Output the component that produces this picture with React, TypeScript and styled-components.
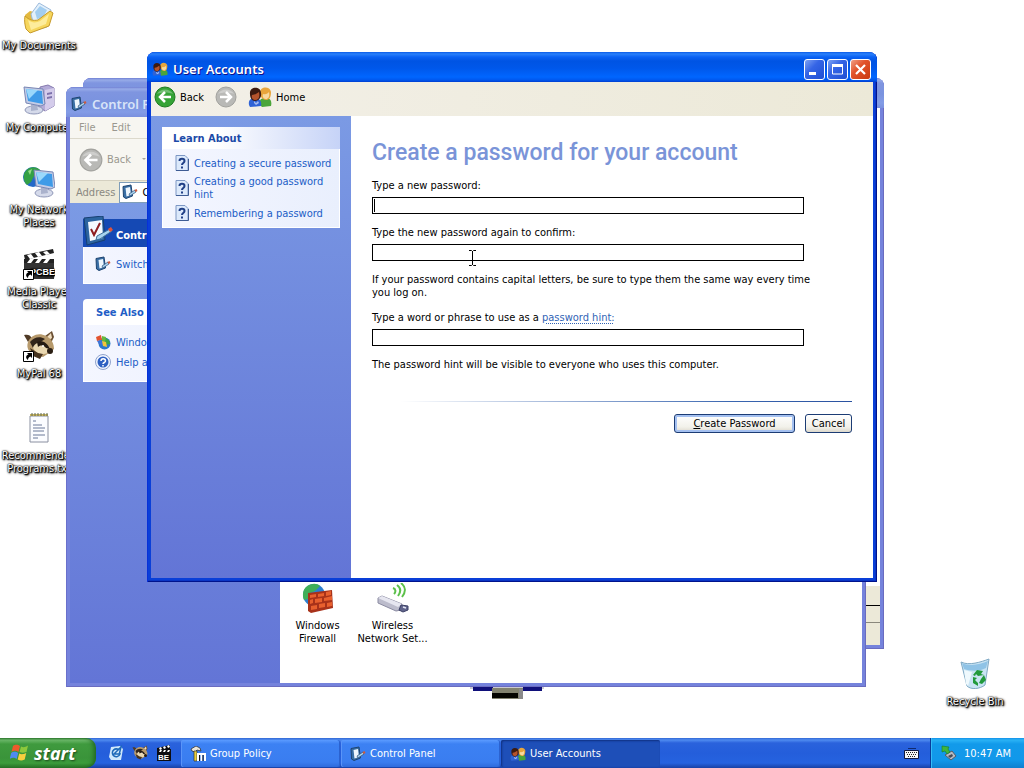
import React from "react";
import styled, { createGlobalStyle, css } from "styled-components";

const uiFont = `"DejaVu Sans Condensed", "Noto Sans", sans-serif`;
const titleFont = `"Noto Sans", "DejaVu Sans Condensed", sans-serif`;

const GlobalStyle = createGlobalStyle`
  *, *::before, *::after { box-sizing: border-box; }
  html, body, #root { height: 100%; }
  body {
    margin: 0;
    background: #fff;
    color: #000;
    font-family: ${uiFont};
    font-size: 11px;
    line-height: 13px;
    overflow: hidden;
  }
  button, input { font: inherit; color: inherit; margin: 0; }
  button { border: 0; padding: 0; background: none; }
  a { text-decoration: none; }
  svg { display: block; flex: none; }
  h1, h2, p, ul { margin: 0; padding: 0; }
  ul { list-style: none; }
`;

/* ---------- desktop ---------- */

const Screen = styled.div`
  display: flex;
  flex-direction: column;
  height: 100%;
`;

const Desktop = styled.main`
  position: relative;
  flex: 1;
  min-height: 0;
  overflow: hidden;
`;

const IconColumn = styled.ul`
  width: 78px;
  padding-top: 2px;
`;

const DesktopItem = styled.li`
  height: 82px;
`;

const Shortcut = styled.a`
  display: flex;
  flex-direction: column;
  align-items: center;
  gap: 5px;
  color: #fff;
  text-align: center;
  text-shadow: 1px 1px 1px #000, 0 0 2px #000, 1px 1px 2px #000, 0 0 1px #000, 1px 1px 3px #000;
`;

const BinSpot = styled.div`
  position: absolute;
  right: 12px;
  bottom: 30px;
  width: 74px;
`;

const TaskbarGlimpse = styled.div`
  position: absolute;
  left: 470px;
  bottom: 38px;
`;

/* ---------- windows ---------- */

const WindowFrame = styled.section<{ $inset: string; $active?: boolean }>`
  position: absolute;
  inset: ${(p) => p.$inset};
  display: flex;
  flex-direction: column;
  border-radius: 8px 8px 0 0;
  overflow: hidden;
  padding: 0 4px 4px;
  ${(p) =>
    p.$active
      ? css`
          background: #0a3fd8;
          box-shadow: inset 1px 0 #0831d9, inset -1px -1px #00138c, inset -2px -2px #0a35c4;
        `
      : css`
          background: #7583dc;
          box-shadow: inset 1px 0 #6a70cc, inset -1px -1px #6a6cc0;
        `}
`;

const TitleBar = styled.header<{ $active?: boolean }>`
  display: flex;
  align-items: center;
  gap: 5px;
  height: 30px;
  flex: none;
  margin: 0 -4px;
  padding: 4px 6px 0 5px;
  font: 600 13px/18px ${titleFont};
  ${(p) =>
    p.$active
      ? css`
          color: #fff;
          text-shadow: 1px 1px #0f1089;
          background: linear-gradient(#0a5be8 0, #2a80fa 2px, #0a62f4 5px, #0054e3 9px, #0057ea 16px, #0066ff 25px, #0058ee 28px, #003dd0 30px);
        `
      : css`
          color: #d8e4f8;
          background: linear-gradient(#7080d4 0, #97abe8 2px, #7f95e0 5px, #7a93df 16px, #839ce6 25px, #7a90de 30px);
        `}
`;

const CaptionButtons = styled.div`
  display: flex;
  gap: 2px;
  margin-left: auto;
`;

const CaptionButton = styled.button<{ $close?: boolean }>`
  width: 21px;
  height: 21px;
  border: 1px solid #fff;
  border-radius: 3px;
  background: ${(p) =>
    p.$close
      ? "linear-gradient(135deg, #f0a088, #e2532b 40%, #c9390f)"
      : "linear-gradient(135deg, #7ea2f2, #3565e6 40%, #1f4fd2)"};
`;

const Client = styled.div`
  display: flex;
  flex: 1;
  min-height: 0;
  background: #fff;
`;

const NavBar = styled.nav`
  display: flex;
  align-items: center;
  gap: 11px;
  height: 34px;
  flex: none;
  padding: 0 3px 4px;
  background: linear-gradient(90deg, #f3f0e8, #ece9d8);
`;

const NavButton = styled.button`
  display: flex;
  align-items: center;
  gap: 4px;
`;

/* ---------- task pane ---------- */

const TaskPane = styled.aside<{ $wide?: boolean }>`
  display: flex;
  flex-direction: column;
  gap: 15px;
  width: ${(p) => (p.$wide ? "210px" : "200px")};
  flex: none;
  padding: ${(p) => (p.$wide ? "16px 13px" : "11px")};
  background: linear-gradient(#7b9ae4, #6375d6);
`;

const Card = styled.section<{ $square?: boolean }>`
  background: #fff;
  border-radius: ${(p) => (p.$square ? "0" : "4px 4px 0 0")};
`;

const CardTitle = styled.h2<{ $soft?: boolean }>`
  display: flex;
  align-items: center;
  font: bold 11px/13px ${uiFont};
  height: 26px;
  padding: 0 13px;
  color: #215dc6;
  ${(p) =>
    p.$soft &&
    css`
      height: 22px;
      padding: 0 11px;
      color: #1c4aa8;
      background: linear-gradient(90deg, #fff 30%, #c6d3f7);
    `}
`;

const BlueCardTitle = styled(CardTitle)`
  position: relative;
  height: 28px;
  padding: 5px 0 0 33px;
  color: #fff;
  background: #1549b4;
`;

const TitlePicture = styled.span`
  position: absolute;
  left: 0;
  bottom: 1px;
`;

const CardList = styled.ul<{ $loose?: boolean }>`
  display: flex;
  flex-direction: column;
  gap: 4px;
  margin: 0 1px 1px;
  padding: ${(p) => (p.$loose ? "9px 11px 11px" : "6px 0 6px 12px")};
  background: linear-gradient(90deg, #f4f6ff, #e9effd);
`;

const CardLink = styled.a`
  display: flex;
  align-items: center;
  gap: 5px;
  color: #215dc6;
`;

/* ---------- account form ---------- */

const Form = styled.form`
  display: flex;
  flex-direction: column;
  gap: 12px;
  flex: 1;
  min-width: 0;
  padding: 23px 21px;
`;

const Heading = styled.h1`
  font: 500 23px/28px Roboto, "Liberation Sans", sans-serif;
  color: #7a94d8;
  white-space: nowrap;
`;

const Field = styled.div`
  position: relative;
  display: flex;
  flex-direction: column;
  gap: 4px;
  margin-right: 48px;
  line-height: 14px;
`;

const TextBox = styled.input`
  width: 100%;
  height: 17px;
  padding: 0 2px;
  border: 1px solid #000;
  border-radius: 0;
  background: #fff;
  outline: 0;
`;

const Caret = styled.span`
  position: absolute;
  left: 2px;
  bottom: 2px;
  width: 1px;
  height: 13px;
  background: #000;
`;

const Pointer = styled.span`
  position: absolute;
  left: 96px;
  bottom: -5px;
`;

const Note = styled.p`
  margin-right: 36px;
`;

const HintLink = styled.a`
  color: #3163b5;
  text-decoration: underline dotted 1px;
  text-underline-offset: 2px;
`;

const Rule = styled.hr`
  width: 100%;
  height: 1px;
  margin: 18px 0 0;
  border: 0;
  background: linear-gradient(90deg, #fff 6%, #3a66b0 75%, #2a52a0);
`;

const Actions = styled.div`
  display: flex;
  justify-content: flex-end;
  gap: 10px;
`;

const PushButton = styled.button<{ $primary?: boolean }>`
  height: 19px;
  min-width: ${(p) => (p.$primary ? "121px" : "47px")};
  border: 1px solid #1c3c74;
  border-radius: 3px;
  background: linear-gradient(#fff, #f2f1ea 70%, #dcd8cc);
  white-space: nowrap;
  ${(p) =>
    p.$primary &&
    css`
      box-shadow: inset 0 0 0 2px #a4c0f0, inset 0 -2px #6a8fe0;
    `}
`;

/* ---------- Control Panel window ---------- */

const MenuBar = styled.div`
  display: flex;
  align-items: center;
  gap: 16px;
  height: 22px;
  flex: none;
  padding: 0 9px;
  color: #9a988f;
  background: #f7f6f1;
  border-bottom: 1px solid #dcd9cc;
`;

const ToolBar = styled.div`
  display: flex;
  align-items: center;
  height: 42px;
  flex: none;
  padding: 0 9px;
  color: #9a988f;
  background: #f7f6f1;
  border-bottom: 1px solid #d4d0c0;
`;

const DropMark = styled.span`
  margin-left: 7px;
  border: 2px solid transparent;
  border-top-color: #a5a39a;
`;

const AddressBar = styled.label`
  display: flex;
  align-items: center;
  gap: 4px;
  height: 22px;
  flex: none;
  padding-left: 6px;
  color: #8a8880;
  background: #ece9d8;
`;

const AddressBox = styled.span`
  display: flex;
  align-items: center;
  flex: 1;
  gap: 4px;
  height: 21px;
  padding-left: 2px;
  border: 1px solid #7f9db9;
  background: #fff;
  color: #000;
`;

const AddressInput = styled.input`
  flex: 1;
  min-width: 0;
  padding: 0;
  border: 0;
  outline: 0;
`;

const AppletArea = styled.div`
  display: flex;
  align-items: flex-end;
  flex: 1;
  padding: 0 0 38px;
`;

const Applet = styled.a`
  display: flex;
  flex-direction: column;
  align-items: center;
  gap: 4px;
  width: 75px;
  color: #000;
  text-align: center;
`;

/* ---------- rear window ---------- */

const RearBody = styled.div`
  display: flex;
  flex-direction: column;
  justify-content: flex-end;
  flex: 1;
  background: #fff;
`;

const RearStrip = styled.div<{ $height: number; $line: string }>`
  height: ${(p) => p.$height}px;
  background: #ece9d8;
  border-bottom: 1px solid ${(p) => p.$line};
`;

/* ---------- taskbar ---------- */

const Taskbar = styled.footer`
  display: flex;
  height: 30px;
  flex: none;
  color: #fff;
  background: linear-gradient(#3168d5 0, #4f8bf0 2px, #2a62dc 5px, #245edb 15px, #2663e0 25px, #1941a5 30px);
`;

const StartButton = styled.button`
  display: flex;
  align-items: center;
  gap: 4px;
  width: 96px;
  padding-left: 10px;
  border-radius: 0 10px 10px 0;
  font: italic bold 18px/24px "Noto Sans", "Open Sans", sans-serif;
  text-shadow: 1px 1px 2px #1c4a1c;
  background: linear-gradient(#2f7a2f 0, #6cb86a 2px, #3f9a3e 6px, #3a943a 20px, #3c9c3c 25px, #277227 30px);
  box-shadow: inset -4px 0 5px -2px #1f641f;
`;

const QuickLaunch = styled.div`
  display: flex;
  align-items: center;
  gap: 8px;
  width: 85px;
  padding-left: 12px;
`;

const IconButton = styled.button`
  width: 16px;
  height: 16px;
`;

const TaskList = styled.div`
  display: flex;
  flex: 1;
  min-width: 0;
  gap: 1px;
  padding: 2px 0 1px;
`;

const TaskButton = styled.button<{ $active?: boolean }>`
  display: flex;
  align-items: center;
  gap: 4px;
  flex: 0 1 159px;
  min-width: 0;
  padding-left: 9px;
  border-radius: 2px;
  color: #fff;
  white-space: nowrap;
  background: ${(p) =>
    p.$active ? "#1e4fb8" : "linear-gradient(#5a9bff, #3c81f3 4px, #3a7df0 22px, #2f6bdc)"};
  box-shadow: ${(p) => (p.$active ? "inset 1px 1px 2px #0f3080" : "inset -1px 0 #2b62d0, inset 1px 0 #5a94f8")};
`;

const LanguageBar = styled.div`
  display: flex;
  align-items: center;
  padding: 0 11px;
`;

const Tray = styled.div`
  display: flex;
  align-items: center;
  gap: 7px;
  padding: 0 13px 0 10px;
  border-left: 1px solid #0a3a9a;
  background: linear-gradient(#1290e8 0, #2ab2f5 2px, #129aea 6px, #1198ea 22px, #0f7fce 30px);
  box-shadow: inset 1px 0 #35bdf7;
`;

/* ---------- pictures ---------- */

const DocumentsPic = () => (
  <svg width="32" height="32" viewBox="0 0 32 32" aria-hidden="true">
    <path d="m2 13 5-4 4 1 2 5-4 16-5-3z" fill="#e3b93f" />
    <path d="M8 12 16 1l12 7-4 17-12 3z" fill="#e3f0fb" stroke="#9dbbdc" />
    <path d="m12 10 5-6 7 4-4 8-6 1z" fill="#a2cdf0" />
    <path d="M2 14c4 4 8 5 13 4l12-9 3 2-4 13-19 7-4-4c-1-4-2-8-1-13z" fill="#f6d65c" stroke="#c79a2a" />
    <path d="M5 18c4 3 8 3 12 1l9-7-3 10-15 6z" fill="#fdec9c" />
  </svg>
);

const Monitor = ({ x = 0, y = 0 }: { x?: number; y?: number }) => (
  <g transform={`translate(${x} ${y})`}>
    <ellipse cx="10" cy="24" rx="9" ry="4" fill="#d5daea" stroke="#8f97b8" />
    <path d="m7 18 6 1 1 5-7 1z" fill="#aab2cc" />
    <path d="m0 1 19 2 2 15-4 2L2 17z" fill="#c5cde6" stroke="#7886b4" />
    <path d="m2 3 16 2 1 13L4 15z" fill="#3f9be8" />
    <path d="m2 3 12 1-9 9z" fill="#9ad8fb" />
  </g>
);

const ComputerPic = () => (
  <svg width="32" height="32" viewBox="0 0 32 32" aria-hidden="true">
    <path d="m17 3 8-2 6 3v18l-9 5-6-4z" fill="#b4abd8" stroke="#8579ae" />
    <path d="m22 6 9-2v18l-9 5z" fill="#d4cceb" />
    <path d="m24 9 5-1v2l-5 1zm0 4 5-1v2l-5 1z" fill="#7d72ac" />
    <Monitor x={1} y={2} />
  </svg>
);

const NetworkPic = () => (
  <svg width="32" height="32" viewBox="0 0 32 32" aria-hidden="true">
    <circle cx="10" cy="11" r="10" fill="#2469c8" />
    <path d="M2 6c5-7 13-5 16-1l-7 5-3 6-4 3C0 15 0 9 2 6z" fill="#34a045" />
    <path d="m5 5 4-2-2 6z" fill="#93d985" />
    <Monitor x={11} y={3} />
  </svg>
);

const ShortcutArrow = () => (
  <g>
    <path d="M.5 21.500h10v10H.5z" fill="#fff" stroke="#000" />
    <path d="M4 23h5v5l-1.500-1.500C6 27 5 28 5 30c-3-2-2-5 .5-5.500z" fill="#000" />
  </g>
);

const ClapperPic = () => (
  <svg width="32" height="32" viewBox="0 0 32 32" aria-hidden="true">
    <path d="M1 14h30v17H1z" fill="#343434" />
    <path d="m1 7 29-6 1 4L2 12z" fill="#222" />
    <path d="m4 7 4-1 3 4-4 1zm8-2 4-1 3 4-4 1zm8-1 4-1 3 3-4 1z" fill="#fff" />
    <path d="M1 11h30v4H1z" fill="#222" />
    <path d="m4 15 3-4h4l-3 4zm8 0 3-4h4l-3 4zm8 0 3-4h4l-3 4z" fill="#fff" />
    <text x="7" y="27" fill="#fff" fontSize="9" fontWeight="bold" fontFamily="Liberation Sans, sans-serif">PCBE</text>
    <ShortcutArrow />
  </svg>
);

const Raccoon = () => (
  <g>
    <path d="M22 6 29 1l2 6-3 6z" fill="#6a4f32" />
    <path d="m24 7 4-4 1 5-3 2z" fill="#f1dfc2" />
    <path d="M1 5c4-1 6 0 8 3l-4 4z" fill="#4f3a26" />
    <path d="M5 12C8 5 16 2 23 6c6 3 8 8 8 13l-5 4-6 4-9-2c-5-3-8-7-6-13z" fill="#b79a6c" />
    <path d="M7 12c4-5 10-6 15-3l-6 4-6 5z" fill="#31251a" />
    <path d="M10 18c1-5 8-7 12-4 4 2 5 6 3 9-5 2-11 2-15-5z" fill="#e9d7b0" />
    <path d="M14 12c5-2 10 0 13 7l-4-1c-3-3-5-3-8-1z" fill="#241a12" />
    <path d="m7 18 8 5 5 1-3 5-7-3z" fill="#46331f" />
    <circle cx="27" cy="21" r="3" fill="#2a1e13" />
    <circle cx="20" cy="16" r="1" fill="#fff" />
  </g>
);

const RaccoonPic = () => (
  <svg width="32" height="32" viewBox="0 0 32 32" aria-hidden="true">
    <Raccoon />
    <ShortcutArrow />
  </svg>
);

const NotePic = () => (
  <svg width="32" height="32" viewBox="0 0 32 32" aria-hidden="true">
    <path d="M7 4h18v26H7z" fill="#fbfcff" stroke="#8a90a0" />
    <path d="M7 2h18v2H7z" fill="#c9b35e" />
    <path d="M9 1v3m3-3v3m3-3v3m3-3v3m3-3v3m3-3v3" stroke="#5f6a52" />
    <path d="M10 9h3m-3 4h9m-9 3h12m-12 3h11m-11 4h12m-12 3h5" stroke="#6a7898" />
  </svg>
);

const BinPic = () => (
  <svg width="32" height="32" viewBox="0 0 32 32" aria-hidden="true">
    <path d="M2 4c8 4 20 0 28-3l-4 26c-5 4-14 5-18 1z" fill="#c9e4f4" stroke="#7fa9c4" />
    <path d="M3 5c8 4 19 1 26-2l-2 7c-8 4-16 3-22 1z" fill="#8fc3e6" />
    <path d="m5 12 8 2-4 14-2-2z" fill="#eff9fd" />
    <path d="m14 17 4-5 6 1-2 3 3 1-6 1-2-2-1 2zm11 0 2 5-4 4-3-1 2-4zm-11 2 4 1-2 2 3 3v3l-5-3z" fill="#229a3c" />
  </svg>
);

const ChecklistPic = ({ size }: { size: number }) => (
  <svg width={size} height={size} viewBox="0 0 30 30" aria-hidden="true">
    <path d="M1 2 20 0l2 24-18 5z" fill="#2c64a0" stroke="#173f70" />
    <path d="m5 6 14-2 1 18-13 3z" fill="#f4f9ff" />
    <path d="m8 13 3 6 6-12" fill="none" stroke="#8e1e22" strokeWidth="2" />
    <path d="m14 20 13-7 2 2-12 8-4 1z" fill="#a7d3ef" stroke="#3b6f9c" />
    <path d="m25 13 3-2 2 3-3 2z" fill="#e0533a" />
  </svg>
);

const PanelPic = () => (
  <svg width="16" height="16" viewBox="0 0 16 16" aria-hidden="true">
    <path d="M1 2.500 9 1l1.500 11L4 14.500 1.500 13z" fill="#3a6fa5" stroke="#1d4470" />
    <path d="m3.500 4 4.500-1 1 8-4.500 1.500z" fill="#eef6fd" />
    <path d="m7 10 6-4 1 2-6 4z" fill="#a9d2ee" stroke="#2b4f78" strokeWidth=".7" />
    <path d="m12.500 6 2-1 1 2-2 1z" fill="#d05a3c" />
  </svg>
);

const UsersPic = ({ size }: { size: number }) => (
  <svg width={size} height={size} viewBox="0 0 24 24" aria-hidden="true">
    <path d="M12 20c-1-6 1-7 6-7s6 4 5 8l-9 1z" fill="#4aa53a" />
    <path d="M12 8c0-7 10-7 11-1 0 6-2 8-5 8s-6-3-6-7z" fill="#e8a53c" />
    <path d="M15 9c3 1 5-1 6-2 1 5-1 7-3 7s-4-2-3-5z" fill="#f7d9a0" />
    <path d="M1 20c-1-5 2-7 6-7s7 3 6 8l-11 1z" fill="#2f63d6" />
    <path d="M2 9c-1-8 11-8 11-1 1 5-3 8-6 8S2 13 2 9z" fill="#3c1a10" />
    <path d="M4 10c3 0 5-2 7-3 1 5 0 8-4 8-2 0-4-2-3-5z" fill="#b4532c" />
    <path d="m6 16 2 2 2-2 1 2-3 2-2-2z" fill="#f2f4ff" opacity=".6" />
  </svg>
);

const ArrowPic = ({ forward, muted, size = 22 }: { forward?: boolean; muted?: boolean; size?: number }) => (
  <svg width={size} height={size} viewBox="0 0 22 22" aria-hidden="true">
    <circle cx="11" cy="11" r="10" fill={muted ? "#b9b9b6" : "#36a336"} stroke={muted ? "#a2a29e" : "#1f7c22"} />
    <path d="M3 8c3-6 13-6 16 0-5-2-11-2-16 0z" fill="#fff" opacity=".3" />
    <path
      d={forward ? "M5 11h11M11 6l5 5-5 5" : "M17 11H6M11 6l-5 5 5 5"}
      fill="none"
      stroke="#fff"
      strokeWidth="2.500"
    />
  </svg>
);

const HelpPagePic = () => (
  <svg width="14" height="16" viewBox="0 0 14 16" aria-hidden="true">
    <path d="M1 .5h9l3 3v12H1z" fill="#dce9fb" stroke="#7d97c4" />
    <path d="M1 15.500h12.500V4" fill="none" stroke="#3e5c94" />
    <path d="M4.500 6c0-3 5-3 5 0 0 2-2.500 2-2.500 4" fill="none" stroke="#1f3f86" strokeWidth="2" />
    <path d="M6 11.500h2v2H6z" fill="#1f3f86" />
  </svg>
);

const UpdatePic = () => (
  <svg width="16" height="16" viewBox="0 0 16 16" aria-hidden="true">
    <circle cx="9.500" cy="9.500" r="6" fill="#2b78cc" />
    <path d="M9 4c4 0 6 3 6 6l-5 1z" fill="#3aa648" />
    <path d="m1 3 5-2 1 5-5 1z" fill="#e2542f" />
    <path d="m7 2 4 1-1 5-3-1z" fill="#67b83f" />
    <path d="m2 7 4-1 2 5-4-1z" fill="#3f74d8" />
    <path d="m7 7 4 1 1 5-4-1z" fill="#f2c53a" />
  </svg>
);

const HelpPic = () => (
  <svg width="16" height="16" viewBox="0 0 16 16" aria-hidden="true">
    <circle cx="8" cy="8" r="7.500" fill="#f2f6ff" stroke="#8fa2cc" />
    <circle cx="8" cy="8" r="5.500" fill="#2e60c2" />
    <path d="M6 7c0-3 4.500-3 4.500 0 0 1.500-2.500 1.500-2.500 3m0 1v1.500" fill="none" stroke="#fff" strokeWidth="1.500" />
  </svg>
);

const FirewallPic = () => (
  <svg width="32" height="32" viewBox="0 0 32 32" aria-hidden="true">
    <circle cx="12" cy="12" r="11" fill="#2c7fcf" />
    <path d="M4 4c5-4 11-4 14-1l-5 5-5 2-2 6-4 1C0 12 1 7 4 4z" fill="#3fae58" />
    <path d="m6 10 24-3 1 18-22 5-3-2z" fill="#a8321a" />
    <path d="m8 12 6-1v3l-6 1zm8-1 6-1v3l-6 1zm8-2 5-1v4l-5 1zM8 17l3-1v4l-3 1zm5-1 7-1v4l-7 1zm9-1 8-2v4l-8 1zM9 23l6-1v4l-6 1zm8-2 6-1v4l-6 1zm8-1 5-1v4l-5 1z" fill="#e8602e" />
  </svg>
);

const WirelessPic = () => (
  <svg width="32" height="32" viewBox="0 0 32 32" aria-hidden="true">
    <path d="m1 15 4-2 20 8-1 6-5 1L1 20z" fill="#bcbccc" stroke="#8b8ba2" />
    <path d="m1 15 4-2 20 8-4 3z" fill="#e6e6f0" />
    <path d="m24 22 7 1v4l-5 2-4-2z" fill="#61658c" stroke="#3d4166" />
    <path d="m26 24 3 1" stroke="#e4e6f4" strokeWidth="1.500" />
    <path d="M16 5c3 1 3 4 1 6m3-9c4 3 4 7 1 11m3-13c5 4 5 9 1 14" fill="none" stroke="#5cc04a" strokeWidth="2" />
  </svg>
);

const FlagPic = () => (
  <svg width="20" height="20" viewBox="0 0 20 20" aria-hidden="true">
    <path d="M3 3c3-2 5-1 7 0L8.500 9c-2-1-4-2-7 0z" fill="#ee5a2c" />
    <path d="M11 3.500c2 1 4 1 7-1L16.500 9c-3 1-5 1-7 0z" fill="#8cc83c" />
    <path d="M1.200 10c3-2 5-1 7 0l-1.500 6c-2-1-4-2-7 0z" fill="#4f8af0" />
    <path d="M9.200 10.500c2 1 4 1 7-.500l-1.500 6.500c-3 1.500-5 1-7 0z" fill="#f8cf3e" />
  </svg>
);

const QuickWebPic = () => (
  <svg width="16" height="16" viewBox="0 0 16 16" aria-hidden="true">
    <path d="m3 2 9-1 3 3-2 11H3L1 12z" fill="#cfe8fb" />
    <path d="M11 5c-4-3-8 1-6 5 2 3 6 2 7-1H6l7-7-2 8" fill="none" stroke="#1d69b8" strokeWidth="1.500" />
  </svg>
);

const QuickClapperPic = () => (
  <svg width="16" height="16" viewBox="0 0 16 16" aria-hidden="true">
    <path d="M1 3 14 0v4h1v12H1z" fill="#0d0d12" />
    <path d="m3 3 2-1 1 2-2 1zm4-1 2-1 1 2-2 1zm4-1 2-1 1 2-2 1zM3 7l1-2h2L5 7zm4 0 1-2h2L9 7zm4 0 1-2h2l-1 2z" fill="#fff" />
    <text x="2" y="15" fill="#fff" fontSize="8" fontWeight="bold" fontFamily="Liberation Sans, sans-serif">BE</text>
  </svg>
);

const PolicyPic = () => (
  <svg width="16" height="16" viewBox="0 0 16 16" aria-hidden="true">
    <path d="M1 3 6 0l4 2 1 3-4-1-2 2-3-1z" fill="#e8e6dc" stroke="#222" strokeWidth=".7" />
    <path d="M4 5h3v10H4z" fill="#e8cf3c" stroke="#333" strokeWidth=".7" />
    <path d="M8 15V8h7v7M11.500 8v7" fill="none" stroke="#fff" strokeWidth="2" />
    <path d="M9.500 9v6m3.500-6v6" stroke="#111" />
  </svg>
);

const KeyboardPic = () => (
  <svg width="15" height="12" viewBox="0 0 15 12" aria-hidden="true">
    <path d="M4 1.500h8" stroke="#102a70" />
    <path d="M.5 3.500h14v8H.5z" fill="#f6f6f6" stroke="#111a40" />
    <path d="M2 5.500h11M3 7.500h10M4 9.500h7" stroke="#222" strokeDasharray="1 1" />
  </svg>
);

const DevicePic = () => (
  <svg width="16" height="16" viewBox="0 0 16 16" aria-hidden="true">
    <path d="m4 10 7-4 4 5-5 4z" fill="#b8bcc4" stroke="#555b66" />
    <path d="m7 11 4-2 1 2-3 2z" fill="#454a55" />
    <path d="m1 1 7 1-1 2 2 3-3 2-2-3-3 1z" fill="#3fb53c" stroke="#1b7d22" strokeWidth=".6" />
  </svg>
);

const GlimpsePic = () => (
  <svg width="74" height="14" viewBox="0 0 74 14" aria-hidden="true">
    <path d="M0 0h74v3H0z" fill="#c9c9d2" />
    <path d="M3 1h20v4H3zM53 1h19v4H53z" fill="#10107a" />
    <path d="M22 2h31v11H22z" fill="#82826e" />
    <path d="M22 7h26v5H22z" fill="#050500" />
    <path d="M49 3h4v10h-4z" fill="#8a8a8a" />
  </svg>
);

const MinimizeMark = () => (
  <svg width="19" height="19" viewBox="0 0 19 19" aria-hidden="true">
    <path d="M4 12h7v3H4z" fill="#fff" />
  </svg>
);

const MaximizeMark = () => (
  <svg width="19" height="19" viewBox="0 0 19 19" aria-hidden="true">
    <path d="M4.500 5h10v9h-10z" fill="none" stroke="#fff" />
    <path d="M4 4h11v3H4z" fill="#fff" />
  </svg>
);

const CloseMark = () => (
  <svg width="19" height="19" viewBox="0 0 19 19" aria-hidden="true">
    <path d="m5 5 9 9m0-9-9 9" stroke="#fff" strokeWidth="2.200" />
  </svg>
);

const IBeam = () => (
  <svg width="9" height="16" viewBox="0 0 9 16" aria-hidden="true">
    <path d="M1 .5h2.500l1 1 1-1H8M4.500 1v14M1 15.500h2.500l1-1 1 1H8" fill="none" stroke="#000" />
  </svg>
);

/* ---------- parts ---------- */

const shortcuts = [
  { label: "My Documents", Pic: DocumentsPic },
  { label: "My Computer", Pic: ComputerPic },
  { label: "My Network Places", Pic: NetworkPic },
  { label: "Media Player Classic", Pic: ClapperPic },
  { label: "MyPal 68", Pic: RaccoonPic },
  { label: "Recommended Programs.txt", Pic: NotePic },
];

const topics = ["Creating a secure password", "Creating a good password hint", "Remembering a password"];

const RearWindow = () => (
  <WindowFrame $inset="78px 140px 89px 83px" aria-label="Group Policy">
    <TitleBar>
      <PanelPic />
    </TitleBar>
    <RearBody>
      <RearStrip $height={20} $line="#000" />
      <RearStrip $height={17} $line="#8a887c" />
      <RearStrip $height={22} $line="#ece9d8" />
    </RearBody>
  </WindowFrame>
);

const ControlPanelWindow = () => (
  <WindowFrame $inset="87px 158px 51px 66px" aria-label="Control Panel">
    <TitleBar>
      <PanelPic />
      Control Panel
    </TitleBar>
    <MenuBar>
      <button type="button">File</button>
      <button type="button">Edit</button>
    </MenuBar>
    <ToolBar>
      <NavButton type="button">
        <ArrowPic muted size={24} />
        Back
        <DropMark />
      </NavButton>
    </ToolBar>
    <AddressBar>
      Address
      <AddressBox>
        <PanelPic />
        <AddressInput defaultValue="Control Panel" />
      </AddressBox>
    </AddressBar>
    <Client>
      <TaskPane $wide>
        <Card>
          <BlueCardTitle>
            <TitlePicture>
              <ChecklistPic size={30} />
            </TitlePicture>
            Control Panel
          </BlueCardTitle>
          <CardList $loose>
            <li>
              <CardLink href="#category">
                <PanelPic />
                Switch to Category View
              </CardLink>
            </li>
          </CardList>
        </Card>
        <Card>
          <CardTitle>See Also</CardTitle>
          <CardList $loose>
            <li>
              <CardLink href="#update">
                <UpdatePic />
                Windows Update
              </CardLink>
            </li>
            <li>
              <CardLink href="#help">
                <HelpPic />
                Help and Support
              </CardLink>
            </li>
          </CardList>
        </Card>
      </TaskPane>
      <AppletArea>
        <Applet href="#firewall">
          <FirewallPic />
          Windows Firewall
        </Applet>
        <Applet href="#wireless">
          <WirelessPic />
          <span>
            Wireless
            <br />
            Network Set...
          </span>
        </Applet>
      </AppletArea>
    </Client>
  </WindowFrame>
);

const UserAccountsWindow = () => (
  <WindowFrame $active $inset="52px 147px 156px 147px" aria-label="User Accounts">
    <TitleBar $active>
      <UsersPic size={16} />
      User Accounts
      <CaptionButtons>
        <CaptionButton type="button" aria-label="Minimize">
          <MinimizeMark />
        </CaptionButton>
        <CaptionButton type="button" aria-label="Maximize">
          <MaximizeMark />
        </CaptionButton>
        <CaptionButton type="button" $close aria-label="Close">
          <CloseMark />
        </CaptionButton>
      </CaptionButtons>
    </TitleBar>
    <NavBar>
      <NavButton type="button">
        <ArrowPic />
        Back
      </NavButton>
      <NavButton type="button" aria-label="Forward">
        <ArrowPic forward muted />
      </NavButton>
      <NavButton type="button">
        <UsersPic size={24} />
        Home
      </NavButton>
    </NavBar>
    <Client>
      <TaskPane>
        <Card $square>
          <CardTitle $soft>Learn About</CardTitle>
          <CardList>
            {topics.map((topic) => (
              <li key={topic}>
                <CardLink href="#learn">
                  <HelpPagePic />
                  {topic}
                </CardLink>
              </li>
            ))}
          </CardList>
        </Card>
      </TaskPane>
      <Form onSubmit={(e) => e.preventDefault()}>
        <Heading>Create a password for your account</Heading>
        <Field>
          <label htmlFor="new-password">Type a new password:</label>
          <TextBox id="new-password" type="password" />
          <Caret />
        </Field>
        <Field>
          <label htmlFor="confirm-password">Type the new password again to confirm:</label>
          <TextBox id="confirm-password" type="password" />
          <Pointer>
            <IBeam />
          </Pointer>
        </Field>
        <Note>
          If your password contains capital letters, be sure to type them the same way every time you log on.
        </Note>
        <Field>
          <label htmlFor="hint">
            Type a word or phrase to use as a <HintLink href="#hint">password hint:</HintLink>
          </label>
          <TextBox id="hint" type="text" />
        </Field>
        <Note>The password hint will be visible to everyone who uses this computer.</Note>
        <Rule />
        <Actions>
          <PushButton $primary type="submit">
            <u>C</u>reate Password
          </PushButton>
          <PushButton type="button">Cancel</PushButton>
        </Actions>
      </Form>
    </Client>
  </WindowFrame>
);

export default function App() {
  return (
    <Screen>
      <GlobalStyle />
      <Desktop>
        <IconColumn>
          {shortcuts.map(({ label, Pic }) => (
            <DesktopItem key={label}>
              <Shortcut href="#open">
                <Pic />
                {label}
              </Shortcut>
            </DesktopItem>
          ))}
        </IconColumn>
        <BinSpot>
          <Shortcut href="#bin">
            <BinPic />
            Recycle Bin
          </Shortcut>
        </BinSpot>
        <TaskbarGlimpse>
          <GlimpsePic />
        </TaskbarGlimpse>
        <RearWindow />
        <ControlPanelWindow />
        <UserAccountsWindow />
      </Desktop>
      <Taskbar>
        <StartButton type="button">
          <FlagPic />
          start
        </StartButton>
        <QuickLaunch>
          <IconButton type="button" aria-label="Web browser">
            <QuickWebPic />
          </IconButton>
          <IconButton type="button" aria-label="MyPal">
            <svg width="16" height="16" viewBox="0 0 32 32" aria-hidden="true">
              <Raccoon />
            </svg>
          </IconButton>
          <IconButton type="button" aria-label="Media Player Classic">
            <QuickClapperPic />
          </IconButton>
        </QuickLaunch>
        <TaskList>
          <TaskButton type="button">
            <PolicyPic />
            Group Policy
          </TaskButton>
          <TaskButton type="button">
            <PanelPic />
            Control Panel
          </TaskButton>
          <TaskButton type="button" $active>
            <UsersPic size={16} />
            User Accounts
          </TaskButton>
        </TaskList>
        <LanguageBar>
          <KeyboardPic />
        </LanguageBar>
        <Tray>
          <DevicePic />
          <time>10:47 AM</time>
        </Tray>
      </Taskbar>
    </Screen>
  );
}
